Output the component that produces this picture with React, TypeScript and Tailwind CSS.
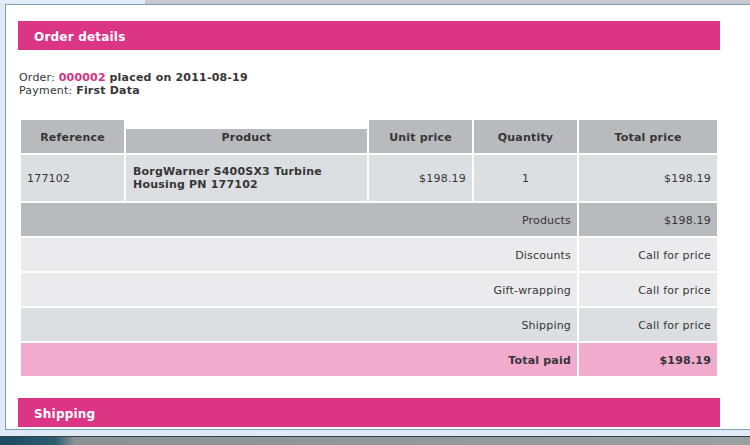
const ROWS = [
  { label: 'Products', value: '$198.19', bg: 'bg-[#b9babe]' },
  { label: 'Discounts', value: 'Call for price', bg: 'bg-[#ebebee]' },
  { label: 'Gift-wrapping', value: 'Call for price', bg: 'bg-[#ebebee]' },
  { label: 'Shipping', value: 'Call for price', bg: 'bg-[#dcdfe2]' },
];

function SectionBar({ title }: { title: string }) {
  return (
    <div className="w-[702px] h-[29px] shrink-0 bg-[#dc3586] flex items-center pl-4 pt-[3px] text-white font-bold text-[12px]">
      {title}
    </div>
  );
}

export default function App() {
  return (
    <div className="w-[750px] h-[445px] overflow-hidden flex flex-col bg-[#dfeaf6] text-[11px] leading-[13px] tracking-[0.2px] text-[#363636] font-['DejaVu_Sans',Verdana,sans-serif]">
      {/* window chrome top */}
      <div className="h-[4px] flex shrink-0">
        <div className="w-[145px] bg-[#e4edf7]" />
        <div className="flex-1 bg-[#c6cace]" />
      </div>

      <div className="h-[426px] flex shrink-0">
        <div className="w-[5px] bg-[#dfeaf6]" />
        <div className="flex-1 bg-white border-l border-t border-b border-[#7f9db9] overflow-hidden pl-3 pt-4 flex flex-col">
          <SectionBar title="Order details" />

          <div className="mt-[21px] ml-[1px]">
            <p>
              Order: <span className="font-bold text-[#d6337f]">000002</span>{' '}
              <span className="font-bold">placed on 2011-08-19</span>
            </p>
            <p>
              Payment: <span className="font-bold">First Data</span>
            </p>
          </div>

          <div className="mt-[23px] ml-[3px] w-[696px] grid grid-cols-[103px_241px_103px_103px_138px] gap-[2px]">
            {/* header */}
            <div className="h-[33px] pt-[1px] bg-[#b9babe] flex items-center justify-center font-bold">Reference</div>
            <div className="mt-[9px] pb-[8px] bg-[#b9babe] flex items-center justify-center font-bold">Product</div>
            <div className="pt-[1px] bg-[#b9babe] flex items-center justify-center font-bold">Unit price</div>
            <div className="pt-[1px] bg-[#b9babe] flex items-center justify-center font-bold">Quantity</div>
            <div className="pt-[1px] bg-[#b9babe] flex items-center justify-center font-bold">Total price</div>

            {/* item */}
            <div className="h-[46px] bg-[#dcdfe2] flex items-center px-[6px]">177102</div>
            <div className="bg-[#dcdfe2] flex items-center px-[7px] font-bold">BorgWarner S400SX3 Turbine Housing PN 177102</div>
            <div className="bg-[#dcdfe2] flex items-center justify-end px-[6px]">$198.19</div>
            <div className="bg-[#dcdfe2] flex items-center justify-center">1</div>
            <div className="bg-[#dcdfe2] flex items-center justify-end px-[6px]">$198.19</div>

            {ROWS.map((r) => (
              <div key={r.label} className="contents">
                <div className={`col-span-4 h-[33px] pt-[1px] ${r.bg} flex items-center justify-end px-[6px]`}>{r.label}</div>
                <div className={`${r.bg} pt-[1px] flex items-center justify-end px-[6px]`}>{r.value}</div>
              </div>
            ))}

            <div className="col-span-4 h-[33px] pt-[1px] bg-[#f1abcd] flex items-center justify-end px-[6px] font-bold">Total paid</div>
            <div className="bg-[#f1abcd] pt-[1px] flex items-center justify-end px-[6px] font-bold">$198.19</div>
          </div>

          <div className="mt-[22px]">
            <SectionBar title="Shipping" />
          </div>
        </div>
      </div>

      {/* window chrome bottom */}
      <div className="h-[6px] shrink-0 bg-[#dfeaf6]" />
      <div className="h-[1px] shrink-0 bg-[#3a3f44]" />
      <div className="h-[8px] shrink-0 bg-[linear-gradient(to_right,#1d4a5e_0px,#2a5d70_55px,#8c9294_75px,#9a9fa1_100%)]" />
    </div>
  );
}
